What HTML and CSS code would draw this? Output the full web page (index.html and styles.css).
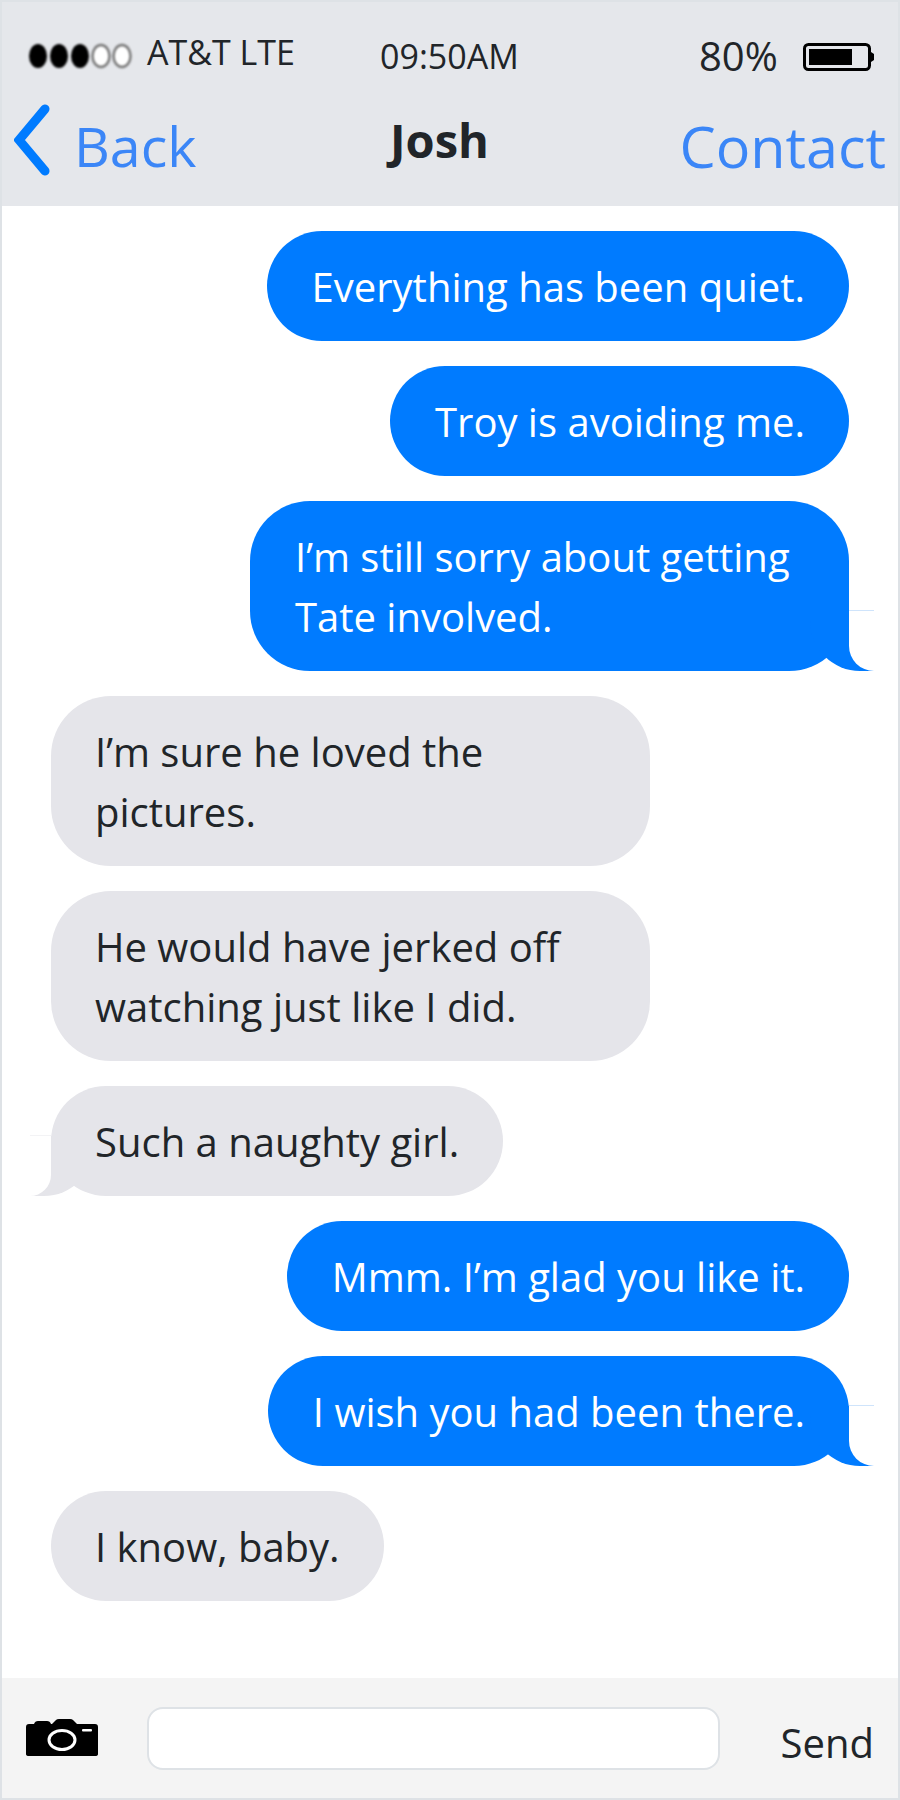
FILE: index.html
```html
<!DOCTYPE html>
<html lang="en">
<head>
    <meta charset="UTF-8">
    <meta name="viewport" content="width=device-width, initial-scale=1.0">
    <title>Josh</title>
    <link rel="stylesheet" href="styles.css">
</head>
<body>
    <div class="phone">
        <div class="top">
            <div class="status">
                <div class="carrier">
                    <svg class="signal" width="108" height="28" viewBox="0 0 108 28">
                        <ellipse cx="13" cy="14" rx="9" ry="12" fill="#000"/>
                        <ellipse cx="34" cy="14" rx="9" ry="12" fill="#000"/>
                        <ellipse cx="55" cy="14" rx="9" ry="12" fill="#000"/>
                        <ellipse cx="76" cy="14" rx="8.5" ry="11" fill="#fff" stroke="#777" stroke-width="2.5"/>
                        <ellipse cx="97" cy="14" rx="8.5" ry="11" fill="#fff" stroke="#777" stroke-width="2.5"/>
                    </svg>
                    <span>AT&amp;T LTE</span>
                </div>
                <div class="time">09:50AM</div>
                <div class="power">
                    <span>80%</span>
                    <svg class="battery" width="72" height="28" viewBox="0 0 72 28">
                        <rect x="1.5" y="1.5" width="65" height="25" rx="4" fill="none" stroke="#000" stroke-width="3"/>
                        <rect x="6" y="6" width="43" height="16" fill="#000"/>
                        <path d="M68 9 L71 11 L71 17 L68 19 Z" fill="#000"/>
                    </svg>
                </div>
            </div>
            <div class="nav">
                <a class="nav-link back">
                    <svg class="chevron" width="36" height="72" viewBox="0 0 36 72">
                        <path d="M31 5 L5 36 L31 67" fill="none" stroke="#007bff" stroke-width="9" stroke-linecap="round" stroke-linejoin="miter"/>
                    </svg>
                    <span>Back</span>
                </a>
                <div class="name">Josh</div>
                <a class="nav-link contact">Contact</a>
            </div>
        </div>

        <div class="chat">
            <div class="msg sent">Everything has been quiet.</div>
            <div class="msg sent">Troy is avoiding me.</div>
            <div class="msg sent tail">I’m still sorry about getting Tate involved.</div>
            <div class="msg received">I’m sure he loved the pictures.</div>
            <div class="msg received">He would have jerked off watching just like I did.</div>
            <div class="msg received tail">Such a naughty girl.</div>
            <div class="msg sent">Mmm. I’m glad you like it.</div>
            <div class="msg sent tail">I wish you had been there.</div>
            <div class="msg received">I know, baby.</div>
        </div>

        <div class="bottom">
            <svg class="camera" width="72" height="38" viewBox="0 0 72 38">
                <path d="M3 5 H8 Q9 2 12 2 H21 Q24 2 25 5 H26 L30 1 Q31 0 33 0 H44 Q46 0 47 1 L51 5 H69 Q72 5 72 8 V35 Q72 37 69 37 H3 Q0 37 0 35 V8 Q0 5 3 5 Z" fill="#000"/>
                <ellipse cx="36" cy="21" rx="13" ry="9.5" fill="none" stroke="#fff" stroke-width="3"/>
                <rect x="56" y="10" width="10" height="2.5" rx="1" fill="#fff"/>
            </svg>
            <div class="text-box"></div>
            <div class="send">Send</div>
        </div>
    </div>
</body>
</html>
```

FILE: styles.css
```css
* {
    box-sizing: border-box;
}
body {
    margin: 0;
    font-family: "Open Sans", "Liberation Sans", sans-serif;
    color: #212529;
    background: #fff;
}
.phone {
    width: 900px;
    height: 1800px;
    border: 2px solid #dee2e6;
    display: flex;
    flex-direction: column;
}
.top {
    background: #e5e7eb;
    height: 204px;
}
.status {
    display: grid;
    grid-template-columns: 355px 319px auto;
    padding: 26px 0 0 23px;
    height: 88px;
    font-size: 34px;
    line-height: 48px;
}
.carrier {
    display: flex;
    align-items: center;
    gap: 14px;
    height: 48px;
}
.signal {
    filter: blur(0.8px);
    margin-top: 8px;
}
.time {
    margin-top: 4px;
}
.power {
    display: flex;
    align-items: center;
    gap: 25px;
    font-size: 40px;
    margin-top: 4px;
    height: 48px;
}
.battery {
    margin-top: 2px;
}
.nav {
    display: flex;
    justify-content: space-between;
    padding: 11px 12px 0 12px;
}
.nav-link {
    color: #3b86f7;
    font-size: 55.5px;
    line-height: 90px;
}
.contact {
    font-size: 57.5px;
}
.back {
    display: flex;
    align-items: center;
    gap: 24px;
}
.chevron {
    margin-bottom: 12px;
}
.name {
    font-size: 47px;
    font-weight: 700;
    line-height: 70px;
    margin: 4px 0 0 3px;
}
.chat {
    flex: 1;
    background: #fff;
    padding: 25px 49px 0 49px;
    display: flex;
    flex-direction: column;
    gap: 25px;
}
.msg {
    position: relative;
    max-width: 599px;
    padding: 26px 44px 24px 45px;
    border-radius: 60px;
    font-size: 40px;
    line-height: 60px;
}
.sent {
    align-self: flex-end;
    background: #007bff;
    color: #fff;
}
.received {
    align-self: flex-start;
    padding-left: 44px;
    background: #e5e5ea;
}
.tail::before,
.tail::after {
    content: "";
    position: absolute;
    bottom: 0;
    height: 60px;
}
.tail::before {
    width: 64px;
}
.tail::after {
    width: 25px;
    background: #fff;
}
.sent.tail::before {
    right: -25px;
    background: #007bff;
    border-bottom-left-radius: 50px;
}
.sent.tail::after {
    right: -25px;
    border-top: 1px solid #cfe4fb;
    border-bottom-left-radius: 25px;
}
.received.tail::before {
    left: -21px;
    background: #e5e5ea;
    border-bottom-right-radius: 50px;
}
.received.tail::after {
    left: -21px;
    width: 21px;
    border-top: 1px solid #f3f3f5;
    border-bottom-right-radius: 25px;
}
.bottom {
    background: #f4f4f4;
    height: 120px;
    display: flex;
    align-items: center;
    padding: 0 24px;
}
.camera {
    flex: none;
}
.text-box {
    width: 574px;
    height: 63px;
    margin-left: 49px;
    background: #fff;
    border: 2px solid #dee2e6;
    border-radius: 16px;
}
.send {
    margin: 10px 0 0 61px;
    font-size: 40px;
    line-height: 60px;
}
```
